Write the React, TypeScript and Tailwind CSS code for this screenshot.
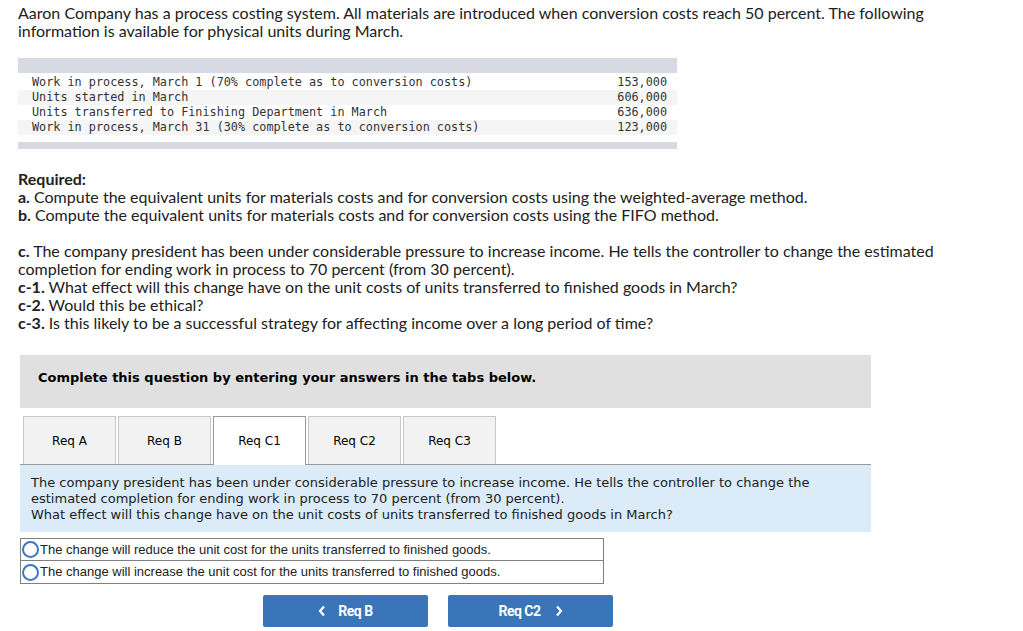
import React from 'react';

const rows = [
  { label: 'Work in process, March 1 (70% complete as to conversion costs)', value: '153,000' },
  { label: 'Units started in March', value: '606,000' },
  { label: 'Units transferred to Finishing Department in March', value: '636,000' },
  { label: 'Work in process, March 31 (30% complete as to conversion costs)', value: '123,000' },
];

const tabs = ['Req A', 'Req B', 'Req C1', 'Req C2', 'Req C3'];

const options = [
  'The change will reduce the unit cost for the units transferred to finished goods.',
  'The change will increase the unit cost for the units transferred to finished goods.',
];

export default function App() {
  return (
    <div className="min-h-[631px] bg-white text-[#212121] pt-[4px] pl-[18px]">
      {/* Intro */}
      <p className="whitespace-nowrap text-[16px] leading-[18px] [font-family:Lato,sans-serif]">
        Aaron Company has a process costing system. All materials are introduced when conversion costs reach 50 percent. The following
        <br />
        information is available for physical units during March.
      </p>

      {/* Data table */}
      <div className="mt-[18px] w-[659px] [font-family:'DejaVu_Sans_Mono',monospace] text-[11.8px] text-[#333]">
        <div className="h-[15px] bg-[#d7dae3]" />
        <div className="mt-[2px]">
          {rows.map((r, i) => (
            <div
              key={r.label}
              className={`flex h-[15px] items-center justify-between pl-[14px] pr-[10px] ${i % 2 === 1 ? 'bg-[#f5f5f5]' : 'bg-white'}`}
            >
              <span>{r.label}</span>
              <span>{r.value}</span>
            </div>
          ))}
        </div>
        <div className="mt-[7px] h-[7px] bg-[#d7dae3]" />
      </div>

      {/* Required */}
      <div className="mt-[21px] whitespace-nowrap text-[16px] leading-[18px] [font-family:Lato,sans-serif]">
        <p className="font-bold">Required:</p>
        <p><b>a.</b> Compute the equivalent units for materials costs and for conversion costs using the weighted-average method.</p>
        <p><b>b.</b> Compute the equivalent units for materials costs and for conversion costs using the FIFO method.</p>
        <p className="mt-[18px]">
          <b>c.</b> The company president has been under considerable pressure to increase income. He tells the controller to change the estimated
          <br />
          completion for ending work in process to 70 percent (from 30 percent).
        </p>
        <p><b>c-1.</b> What effect will this change have on the unit costs of units transferred to finished goods in March?</p>
        <p><b>c-2.</b> Would this be ethical?</p>
        <p><b>c-3.</b> Is this likely to be a successful strategy for affecting income over a long period of time?</p>
      </div>

      {/* Question panel */}
      <div className="ml-[2px] mt-[23px] w-[851px] [font-family:'DejaVu_Sans',Verdana,sans-serif]">
        <div className="flex h-[53px] items-center bg-[#e0e0e0] pb-[8px] pl-[18px] text-[13px] font-bold text-black">
          Complete this question by entering your answers in the tabs below.
        </div>

        <div className="mt-[8px] flex items-end gap-[2px] pl-[3px]">
          {tabs.map((t) =>
            t === 'Req C1' ? (
              <div
                key={t}
                className="relative z-10 -mb-[1px] flex h-[49px] w-[93px] items-center justify-center border border-b-0 border-[#999] bg-white pb-[1px] text-[12px] text-black"
              >
                {t}
              </div>
            ) : (
              <div
                key={t}
                className="flex h-[48px] w-[93px] items-center justify-center border border-b-0 border-[#c8c8c8] bg-[#f2f2f2] text-[12px] text-black"
              >
                {t}
              </div>
            )
          )}
        </div>

        <div className="border-t border-[#999] bg-[#dbebf8] px-[11px] pt-[10px] pb-[9px] text-[13px] leading-[16px] text-[#222]">
          <p>
            The company president has been under considerable pressure to increase income. He tells the controller to change the
            <br />
            estimated completion for ending work in process to 70 percent (from 30 percent).
          </p>
          <p>What effect will this change have on the unit costs of units transferred to finished goods in March?</p>
        </div>

        <div className="mt-[6px] w-[584px] border border-[#808080] [font-family:'Liberation_Sans_Narrow','Liberation_Sans',sans-serif] text-[13px] text-[#222]">
          {options.map((o, i) => (
            <div key={o} className={`flex h-[22px] items-center gap-[1px] ${i === 0 ? 'border-b border-[#808080]' : ''}`}>
              <span className="ml-[1px] inline-block h-[17px] w-[17px] rounded-full border-[2px] border-[#3a78c0]" />
              <span>{o}</span>
            </div>
          ))}
        </div>

        <div className="mt-[11px] flex gap-[20px] pl-[243px] [font-family:Roboto,sans-serif]">
          <button className="flex h-[32px] w-[165px] items-center justify-center gap-[12px] rounded-[2px] bg-[#3a75b9] text-[14px] font-bold tracking-[-0.5px] text-white">
            <svg width="8" height="12" viewBox="0 0 8 12" fill="none">
              <path d="M6 1.5 L2 6 L6 10.5" stroke="white" strokeWidth="2.2" />
            </svg>
            Req B
          </button>
          <button className="flex h-[32px] w-[165px] items-center justify-center gap-[14px] rounded-[2px] bg-[#3a75b9] text-[14px] font-bold tracking-[-0.5px] text-white">
            Req C2
            <svg width="8" height="12" viewBox="0 0 8 12" fill="none">
              <path d="M2 1.5 L6 6 L2 10.5" stroke="white" strokeWidth="2.2" />
            </svg>
          </button>
        </div>
      </div>
    </div>
  );
}
